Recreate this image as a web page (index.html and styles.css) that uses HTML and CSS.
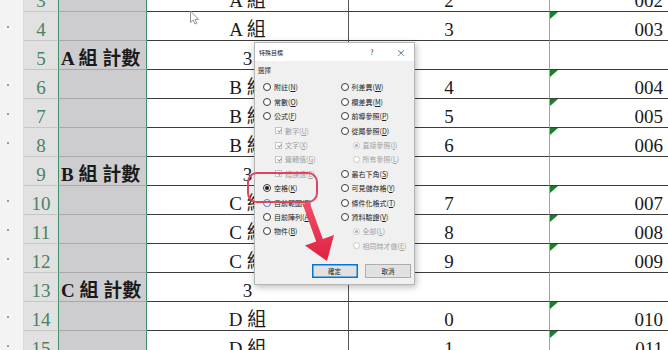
FILE: index.html
```html
<!DOCTYPE html>
<html lang="zh-Hant">
<head>
  <meta charset="UTF-8">
  <title>特殊目標</title>
  <link rel="stylesheet" href="styles.css">
</head>
<body>
  <div class="sheet">
    <div class="row"><div class="ol dot"></div><div class="rh">3</div><div class="ca"></div><div class="cb">A 組</div><div class="cc">2</div><div class="cd"><i class="tri"></i>002</div></div>
    <div class="row"><div class="ol dot"></div><div class="rh">4</div><div class="ca"></div><div class="cb">A 組</div><div class="cc">3</div><div class="cd"><i class="tri"></i>003</div></div>
    <div class="row"><div class="ol"></div><div class="rh">5</div><div class="ca">A 組 計數</div><div class="cb">3</div><div class="cc"></div><div class="cd"></div></div>
    <div class="row"><div class="ol dot"></div><div class="rh">6</div><div class="ca"></div><div class="cb">B 組</div><div class="cc">4</div><div class="cd"><i class="tri"></i>004</div></div>
    <div class="row"><div class="ol dot"></div><div class="rh">7</div><div class="ca"></div><div class="cb">B 組</div><div class="cc">5</div><div class="cd"><i class="tri"></i>005</div></div>
    <div class="row"><div class="ol dot"></div><div class="rh">8</div><div class="ca"></div><div class="cb">B 組</div><div class="cc">6</div><div class="cd"><i class="tri"></i>006</div></div>
    <div class="row"><div class="ol"></div><div class="rh">9</div><div class="ca">B 組 計數</div><div class="cb">3</div><div class="cc"></div><div class="cd"></div></div>
    <div class="row"><div class="ol dot"></div><div class="rh">10</div><div class="ca"></div><div class="cb">C 組</div><div class="cc">7</div><div class="cd"><i class="tri"></i>007</div></div>
    <div class="row"><div class="ol dot"></div><div class="rh">11</div><div class="ca"></div><div class="cb">C 組</div><div class="cc">8</div><div class="cd"><i class="tri"></i>008</div></div>
    <div class="row"><div class="ol dot"></div><div class="rh">12</div><div class="ca"></div><div class="cb">C 組</div><div class="cc">9</div><div class="cd"><i class="tri"></i>009</div></div>
    <div class="row"><div class="ol"></div><div class="rh">13</div><div class="ca">C 組 計數</div><div class="cb">3</div><div class="cc"></div><div class="cd"></div></div>
    <div class="row"><div class="ol dot"></div><div class="rh">14</div><div class="ca"></div><div class="cb">D 組</div><div class="cc">0</div><div class="cd"><i class="tri"></i>010</div></div>
    <div class="row"><div class="ol dot"></div><div class="rh">15</div><div class="ca"></div><div class="cb">D 組</div><div class="cc">1</div><div class="cd"><i class="tri"></i>011</div></div>
  </div>

  <div class="dlg">
    <div class="dlg-title">
      <span class="dlg-name">特殊目標</span>
      <span class="tbtn">?</span>
      <span class="tbtn close">×</span>
    </div>
    <div class="dlg-body">
      <div class="group-label">選擇</div>
      <div class="opts">
        <div class="opt"><i class="rd"></i><span>附註(<u>N</u>)</span></div>
        <div class="opt"><i class="rd"></i><span>常數(<u>O</u>)</span></div>
        <div class="opt"><i class="rd"></i><span>公式(<u>F</u>)</span></div>
        <div class="opt sub off"><i class="ck"></i><span>數字(<u>U</u>)</span></div>
        <div class="opt sub off"><i class="ck"></i><span>文字(<u>X</u>)</span></div>
        <div class="opt sub off"><i class="ck"></i><span>邏輯值(<u>G</u>)</span></div>
        <div class="opt sub off"><i class="ck"></i><span>錯誤值(<u>E</u>)</span></div>
        <div class="opt"><i class="rd on"></i><span>空格(<u>K</u>)</span></div>
        <div class="opt"><i class="rd hover"></i><span>目前範圍(<u>R</u>)</span></div>
        <div class="opt"><i class="rd"></i><span>目前陣列(<u>A</u>)</span></div>
        <div class="opt"><i class="rd"></i><span>物件(<u>B</u>)</span></div>
        <div class="opt"></div>
        <div class="opt"><i class="rd"></i><span>列差異(<u>W</u>)</span></div>
        <div class="opt"><i class="rd"></i><span>欄差異(<u>M</u>)</span></div>
        <div class="opt"><i class="rd"></i><span>前導參照(<u>P</u>)</span></div>
        <div class="opt"><i class="rd"></i><span>從屬參照(<u>D</u>)</span></div>
        <div class="opt sub off"><i class="rd on"></i><span>直接參照(<u>I</u>)</span></div>
        <div class="opt sub off"><i class="rd"></i><span>所有參照(<u>L</u>)</span></div>
        <div class="opt"><i class="rd"></i><span>最右下角(<u>S</u>)</span></div>
        <div class="opt"><i class="rd"></i><span>可見儲存格(<u>Y</u>)</span></div>
        <div class="opt"><i class="rd"></i><span>條件化格式(<u>T</u>)</span></div>
        <div class="opt"><i class="rd"></i><span>資料驗證(<u>V</u>)</span></div>
        <div class="opt sub off"><i class="rd on"></i><span>全部(<u>L</u>)</span></div>
        <div class="opt sub off"><i class="rd"></i><span>相同時才做(<u>E</u>)</span></div>
      </div>
      <div class="btns">
        <div class="btn def">確定</div>
        <div class="btn">取消</div>
      </div>
    </div>
  </div>

  <svg class="marks" width="668" height="350" viewBox="0 0 668 350">
    <path d="M190.5 11 L190.5 22.5 L193.2 20 L195 24 L196.8 23.2 L195 19.4 L198.6 19.4 Z" fill="#fff" stroke="#8a8a8a" stroke-width="0.9" stroke-linejoin="round"/>
    <rect x="248" y="173" width="69" height="29" rx="9" fill="none" stroke="#e0445c" stroke-width="2"/>
    <defs>
      <linearGradient id="ar" x1="0" y1="0" x2="0" y2="1">
        <stop offset="0" stop-color="#f0506a"/>
        <stop offset="1" stop-color="#e0203f"/>
      </linearGradient>
    </defs>
    <polygon points="302.7,204.2 309.3,201.8 322.8,239.1 334,235 327,261 305,245.6 316.2,241.5" fill="url(#ar)"/>
  </svg>
</body>
</html>
```

FILE: styles.css
```css
body {
  margin: 0;
  width: 668px;
  height: 350px;
  overflow: hidden;
  position: relative;
  background: #fff;
  font-family: "Liberation Serif", "Noto Sans CJK TC", serif;
  color: #1a1a1a;
}

/* sheet */
.sheet {
  margin-top: -17px;
}
.row {
  display: grid;
  grid-template-columns: 24px 34px 89px 201px 201px 119px;
  height: 29px;
}
.row > div {
  box-sizing: border-box;
  height: 29px;
  display: flex;
  align-items: flex-end;
  padding-bottom: 1px;
  font-size: 19px;
  line-height: 19px;
  white-space: nowrap;
  overflow: hidden;
}
.row > .ol {
  background: #f3f3f3;
  border-right: 1px solid #dadada;
  align-items: center;
  padding: 0 0 0 7px;
}
.ol.dot::after {
  content: "";
  width: 2px;
  height: 2px;
  background: #9c9c9c;
}
.rh {
  background: #e1e1e1;
  color: #4a8264;
  justify-content: center;
  border-bottom: 1px solid #c6c6c6;
}
.ca {
  background: #cdcdcf;
  border-left: 1px solid #3f8f68;
  border-right: 1px solid #3f8f68;
  border-bottom: 1px solid #a8a8aa;
  padding-left: 2px;
  font-weight: bold;
}
.cb {
  justify-content: center;
  border-bottom: 1px solid #3c3c3c;
}
.cc {
  justify-content: center;
  border-left: 1px solid #555;
  border-bottom: 1px solid #3c3c3c;
}
.cd {
  justify-content: flex-end;
  padding-right: 5px;
  border-left: 1px solid #a3a3a3;
  border-bottom: 1px solid #3c3c3c;
  position: relative;
}
.tri {
  position: absolute;
  top: 0;
  left: 0;
  width: 0;
  height: 0;
  border-top: 7px solid #16802a;
  border-right: 8px solid transparent;
}

/* dialog */
.dlg {
  position: absolute;
  left: 254px;
  top: 42px;
  width: 161px;
  height: 243px;
  box-sizing: border-box;
  background: #f0f0f0;
  border: 1px solid #b5b5b5;
  box-shadow: 1px 2px 7px rgba(0, 0, 0, 0.28);
  font-family: "Noto Sans CJK TC", "Noto Sans", sans-serif;
  font-size: 7px;
  color: #222;
}
.dlg-title {
  height: 18px;
  display: flex;
  align-items: center;
  gap: 9px;
  padding: 0 3px 0 4px;
  background: #fff;
}
.dlg-name {
  flex: 1;
  font-size: 6px;
}
.tbtn {
  width: 20px;
  text-align: center;
  font-size: 7px;
  color: #333;
}
.tbtn.close {
  font-size: 10px;
  font-weight: 300;
}
.dlg-body {
  padding: 4px 3px 0 3px;
}
.group-label {
  height: 10px;
  line-height: 10px;
  font-size: 6.5px;
}
.opts {
  margin-top: 5.3px;
  padding-left: 5px;
  display: grid;
  grid-template-columns: 77.5px 1fr;
  grid-template-rows: repeat(12, 14.4px);
  grid-auto-flow: column;
}
.opt {
  display: flex;
  align-items: center;
  gap: 3px;
  white-space: nowrap;
}
.opt u {
  text-decoration-thickness: 0.5px;
}
.opt.sub {
  padding-left: 12px;
}
.opt.off {
  color: #a2a2a2;
}
.rd {
  width: 8px;
  height: 8px;
  box-sizing: border-box;
  border: 1px solid #3a3a3a;
  border-radius: 50%;
  background: #fff;
  display: flex;
  align-items: center;
  justify-content: center;
  flex: none;
}
.rd.on::after {
  content: "";
  width: 4px;
  height: 4px;
  border-radius: 50%;
  background: #1a1a1a;
}
.rd.hover {
  border-color: #3c7fd8;
}
.off .rd {
  width: 7px;
  height: 7px;
  border-color: #c8c8c8;
}
.off .rd.on::after {
  width: 3px;
  height: 3px;
  background: #aaa;
}
.ck {
  width: 7px;
  height: 7px;
  box-sizing: border-box;
  border: 1px solid #c4c4c4;
  background: #fff;
  position: relative;
  flex: none;
}
.ck::after {
  content: "";
  position: absolute;
  left: 1.5px;
  top: 0;
  width: 1.6px;
  height: 3.4px;
  border-right: 1px solid #9d9d9d;
  border-bottom: 1px solid #9d9d9d;
  transform: rotate(40deg);
}
.btns {
  margin-top: 10.9px;
  display: flex;
  justify-content: flex-end;
  gap: 7.5px;
}
.btn {
  width: 46px;
  height: 14px;
  box-sizing: border-box;
  border: 1px solid #adadad;
  background: #e1e1e1;
  display: flex;
  align-items: center;
  justify-content: center;
  font-size: 6.5px;
}
.btn.def {
  border: 1px solid #0078d7;
  box-shadow: inset 0 0 0 0.5px #0078d7;
}

/* annotation */
.marks {
  position: absolute;
  left: 0;
  top: 0;
  pointer-events: none;
}
```
